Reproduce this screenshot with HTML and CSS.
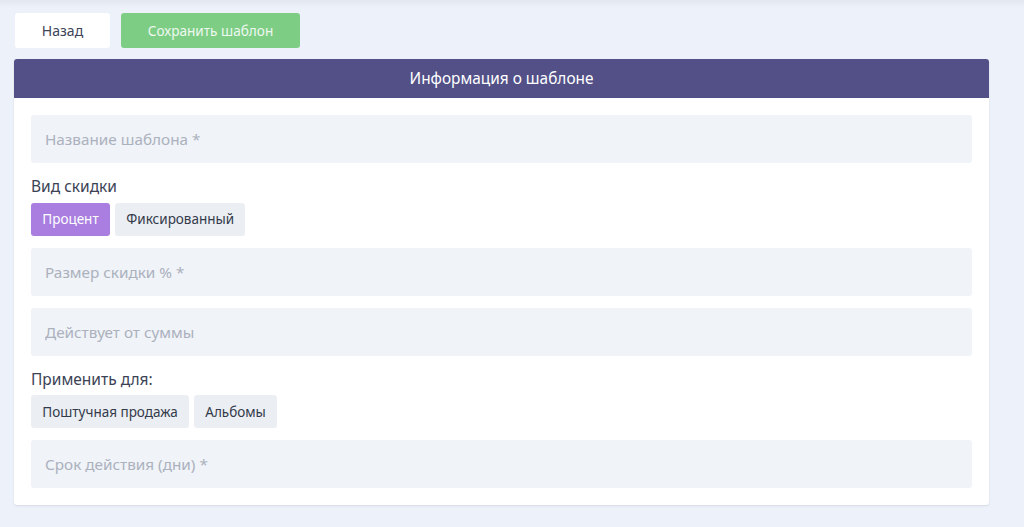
FILE: index.html
```html
<!DOCTYPE html>
<html lang="ru">

<head>
    <meta charset="UTF-8">
    <meta name="viewport" content="width=device-width, initial-scale=1.0">
    <title>Шаблон скидки</title>
    <link rel="stylesheet" href="styles.css">
</head>

<body>
    <div class="page">
        <div class="actions">
            <a href="#" class="btn btn-back">Назад</a>
            <a href="#" class="btn btn-save">Сохранить шаблон</a>
        </div>

        <div class="card">
            <div class="card-header">Информация о шаблоне</div>
            <div class="card-body">
                <input type="text" class="field" placeholder="Название шаблона *">

                <div class="label">Вид скидки</div>
                <div class="chips">
                    <span class="chip chip-active">Процент</span>
                    <span class="chip">Фиксированный</span>
                </div>

                <input type="text" class="field" placeholder="Размер скидки % *">
                <input type="text" class="field" placeholder="Действует от суммы">

                <div class="label">Применить для:</div>
                <div class="chips">
                    <span class="chip">Поштучная продажа</span>
                    <span class="chip">Альбомы</span>
                </div>

                <input type="text" class="field field-last" placeholder="Срок действия (дни) *">
            </div>
        </div>
    </div>
</body>

</html>
```

FILE: styles.css
```css
* {
    box-sizing: border-box;
}

body {
    margin: 0;
    font-family: "Noto Sans", "Open Sans", Arial, sans-serif;
    background-color: #edf1f9;
    color: #3b4254;
    height: 100vh;
    box-shadow: inset 0 8px 10px -8px rgba(60, 70, 110, 0.12);
}

.page {
    padding: 13px 35px 0 14px;
}

.actions {
    display: flex;
    gap: 11px;
    margin-bottom: 11px;
    padding-left: 1px;
}

.btn {
    display: inline-flex;
    align-items: center;
    justify-content: center;
    height: 35px;
    font-size: 14px;
    border-radius: 3px;
    text-decoration: none;
}

.btn-back {
    width: 95px;
    background-color: #fff;
    color: #3d4457;
}

.btn-save {
    width: 179px;
    background-color: #7dcd85;
    color: #eef8ef;
    font-size: 13.6px;
}

.card {
    background-color: #fff;
    border-radius: 3px;
    box-shadow: 0 1px 2px rgba(40, 50, 90, 0.12);
    overflow: hidden;
}

.card-header {
    height: 39px;
    display: flex;
    align-items: center;
    justify-content: center;
    background-color: #525087;
    color: #fff;
    font-size: 15.4px;
}

.card-body {
    padding: 17px 17px 17px;
    display: flex;
    flex-direction: column;
}

.field {
    height: 48px;
    border: none;
    border-radius: 3px;
    background-color: #f0f3f8;
    padding: 0 14px;
    font-family: inherit;
    font-size: 15.3px;
    color: #3b4254;
    margin-bottom: 12px;
    outline: none;
}

.field::placeholder {
    color: #abb1bd;
}

.field-last {
    margin-bottom: 0;
}

.label {
    font-size: 15.5px;
    line-height: 23.5px;
    margin-bottom: 4px;
}

.chips {
    display: flex;
    gap: 5px;
    margin-bottom: 12px;
}

.chip {
    height: 33px;
    padding: 0 11.3px;
    display: inline-flex;
    align-items: center;
    background-color: #ebeef3;
    border-radius: 3px;
    font-size: 13.5px;
    color: #333a4a;
}

.chip-active {
    background-color: #a97ee0;
    color: #fff;
}
```
